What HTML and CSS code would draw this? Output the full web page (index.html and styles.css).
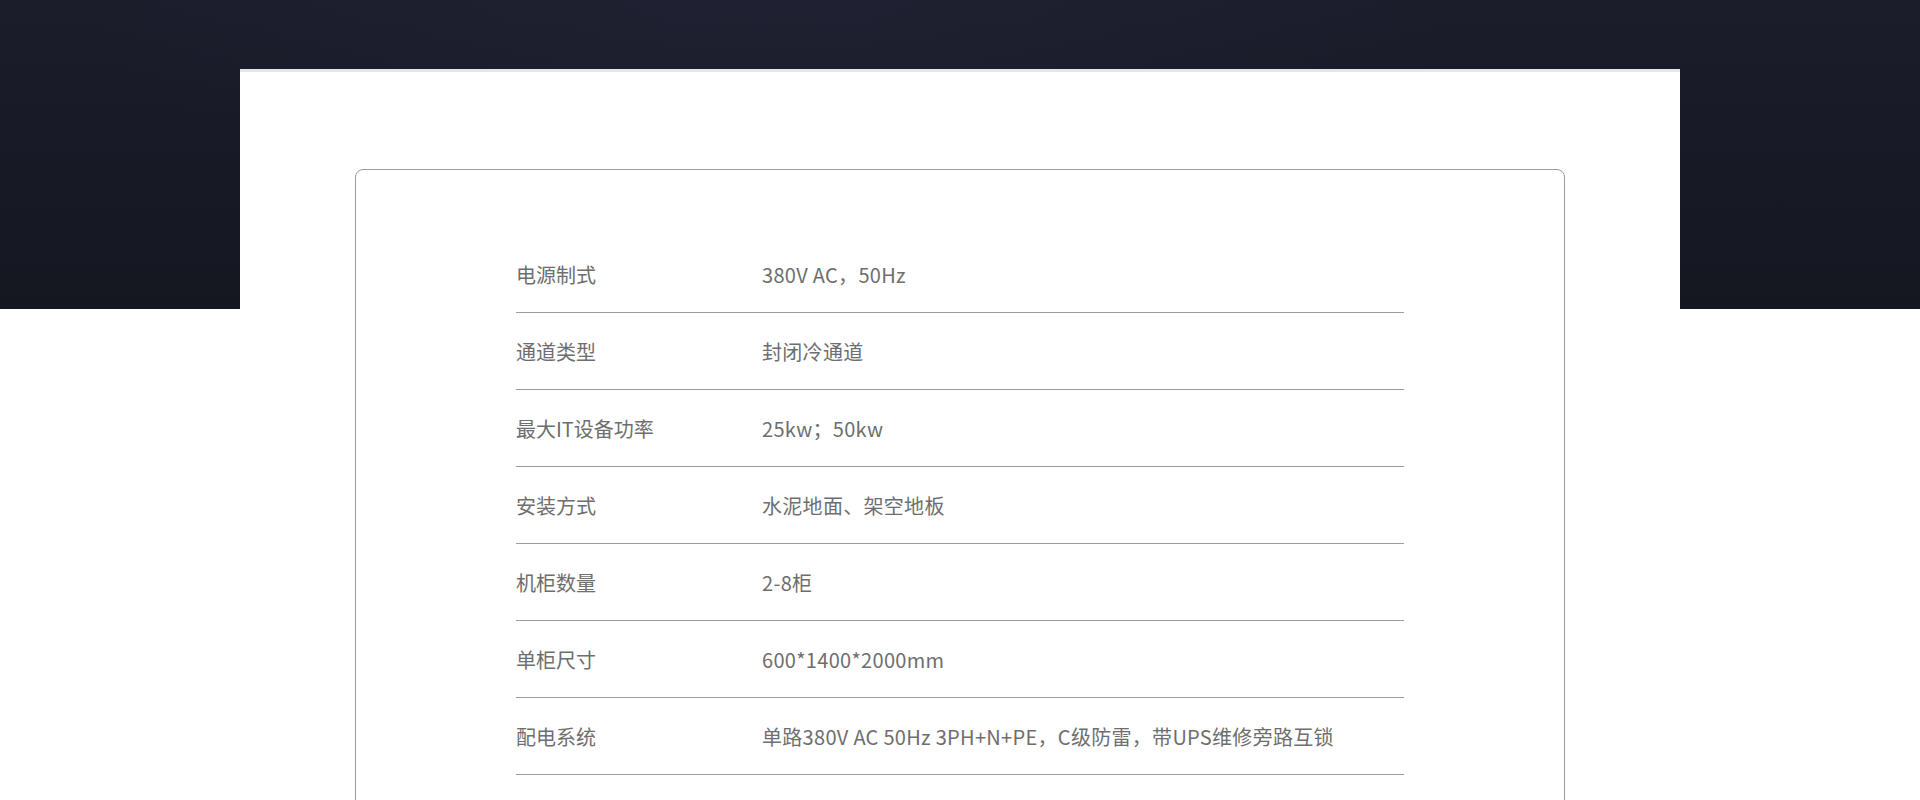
FILE: index.html
```html
<!DOCTYPE html>
<html lang="zh-CN">
<head>
<meta charset="utf-8">
<title>参数</title>
<link rel="stylesheet" href="styles.css">
</head>
<body>
<div class="hero"></div>
<section class="panel">
  <div class="card">
    <div class="row"><div class="label">电源制式</div><div class="value">380V AC，50Hz</div></div>
    <div class="row"><div class="label">通道类型</div><div class="value">封闭冷通道</div></div>
    <div class="row"><div class="label">最大IT设备功率</div><div class="value">25kw；50kw</div></div>
    <div class="row"><div class="label">安装方式</div><div class="value">水泥地面、架空地板</div></div>
    <div class="row"><div class="label">机柜数量</div><div class="value">2-8柜</div></div>
    <div class="row"><div class="label">单柜尺寸</div><div class="value">600*1400*2000mm</div></div>
    <div class="row"><div class="label">配电系统</div><div class="value">单路380V AC 50Hz 3PH+N+PE，C级防雷，带UPS维修旁路互锁</div></div>
  </div>
</section>
</body>
</html>
```
FILE: styles.css
```css
html, body {
  margin: 0;
  padding: 0;
  background: #ffffff;
}
body {
  font-family: "Noto Sans CJK SC", "Noto Sans", sans-serif;
  overflow: hidden;
}
.hero {
  height: 309px;
  background:
    radial-gradient(ellipse 700px 200px at 40% 0%, rgba(40,44,66,0.3), rgba(40,44,66,0) 100%),
    linear-gradient(180deg, #1b1d2b 0%, #171925 55%, #151720 100%);
}
.panel {
  position: relative;
  width: 1440px;
  margin: -240px auto 0;
  background: #ffffff;
  border-top: 3px solid #e6e6e6;
  padding-top: 97px;
  box-sizing: border-box;
}
.card {
  width: 1210px;
  margin: 0 auto;
  box-sizing: border-box;
  border: 1px solid #9c9c9c;
  border-radius: 8px;
  padding: 66px 160px 120px;
}
.row {
  display: grid;
  grid-template-columns: 246px 1fr;
  align-items: center;
  height: 76px;
  border-bottom: 1px solid #9c9c9c;
  color: #6e6e6e;
  font-size: 20px;
}
.label, .value {
  white-space: nowrap;
}
.value {
  letter-spacing: 0.3px;
}
```
